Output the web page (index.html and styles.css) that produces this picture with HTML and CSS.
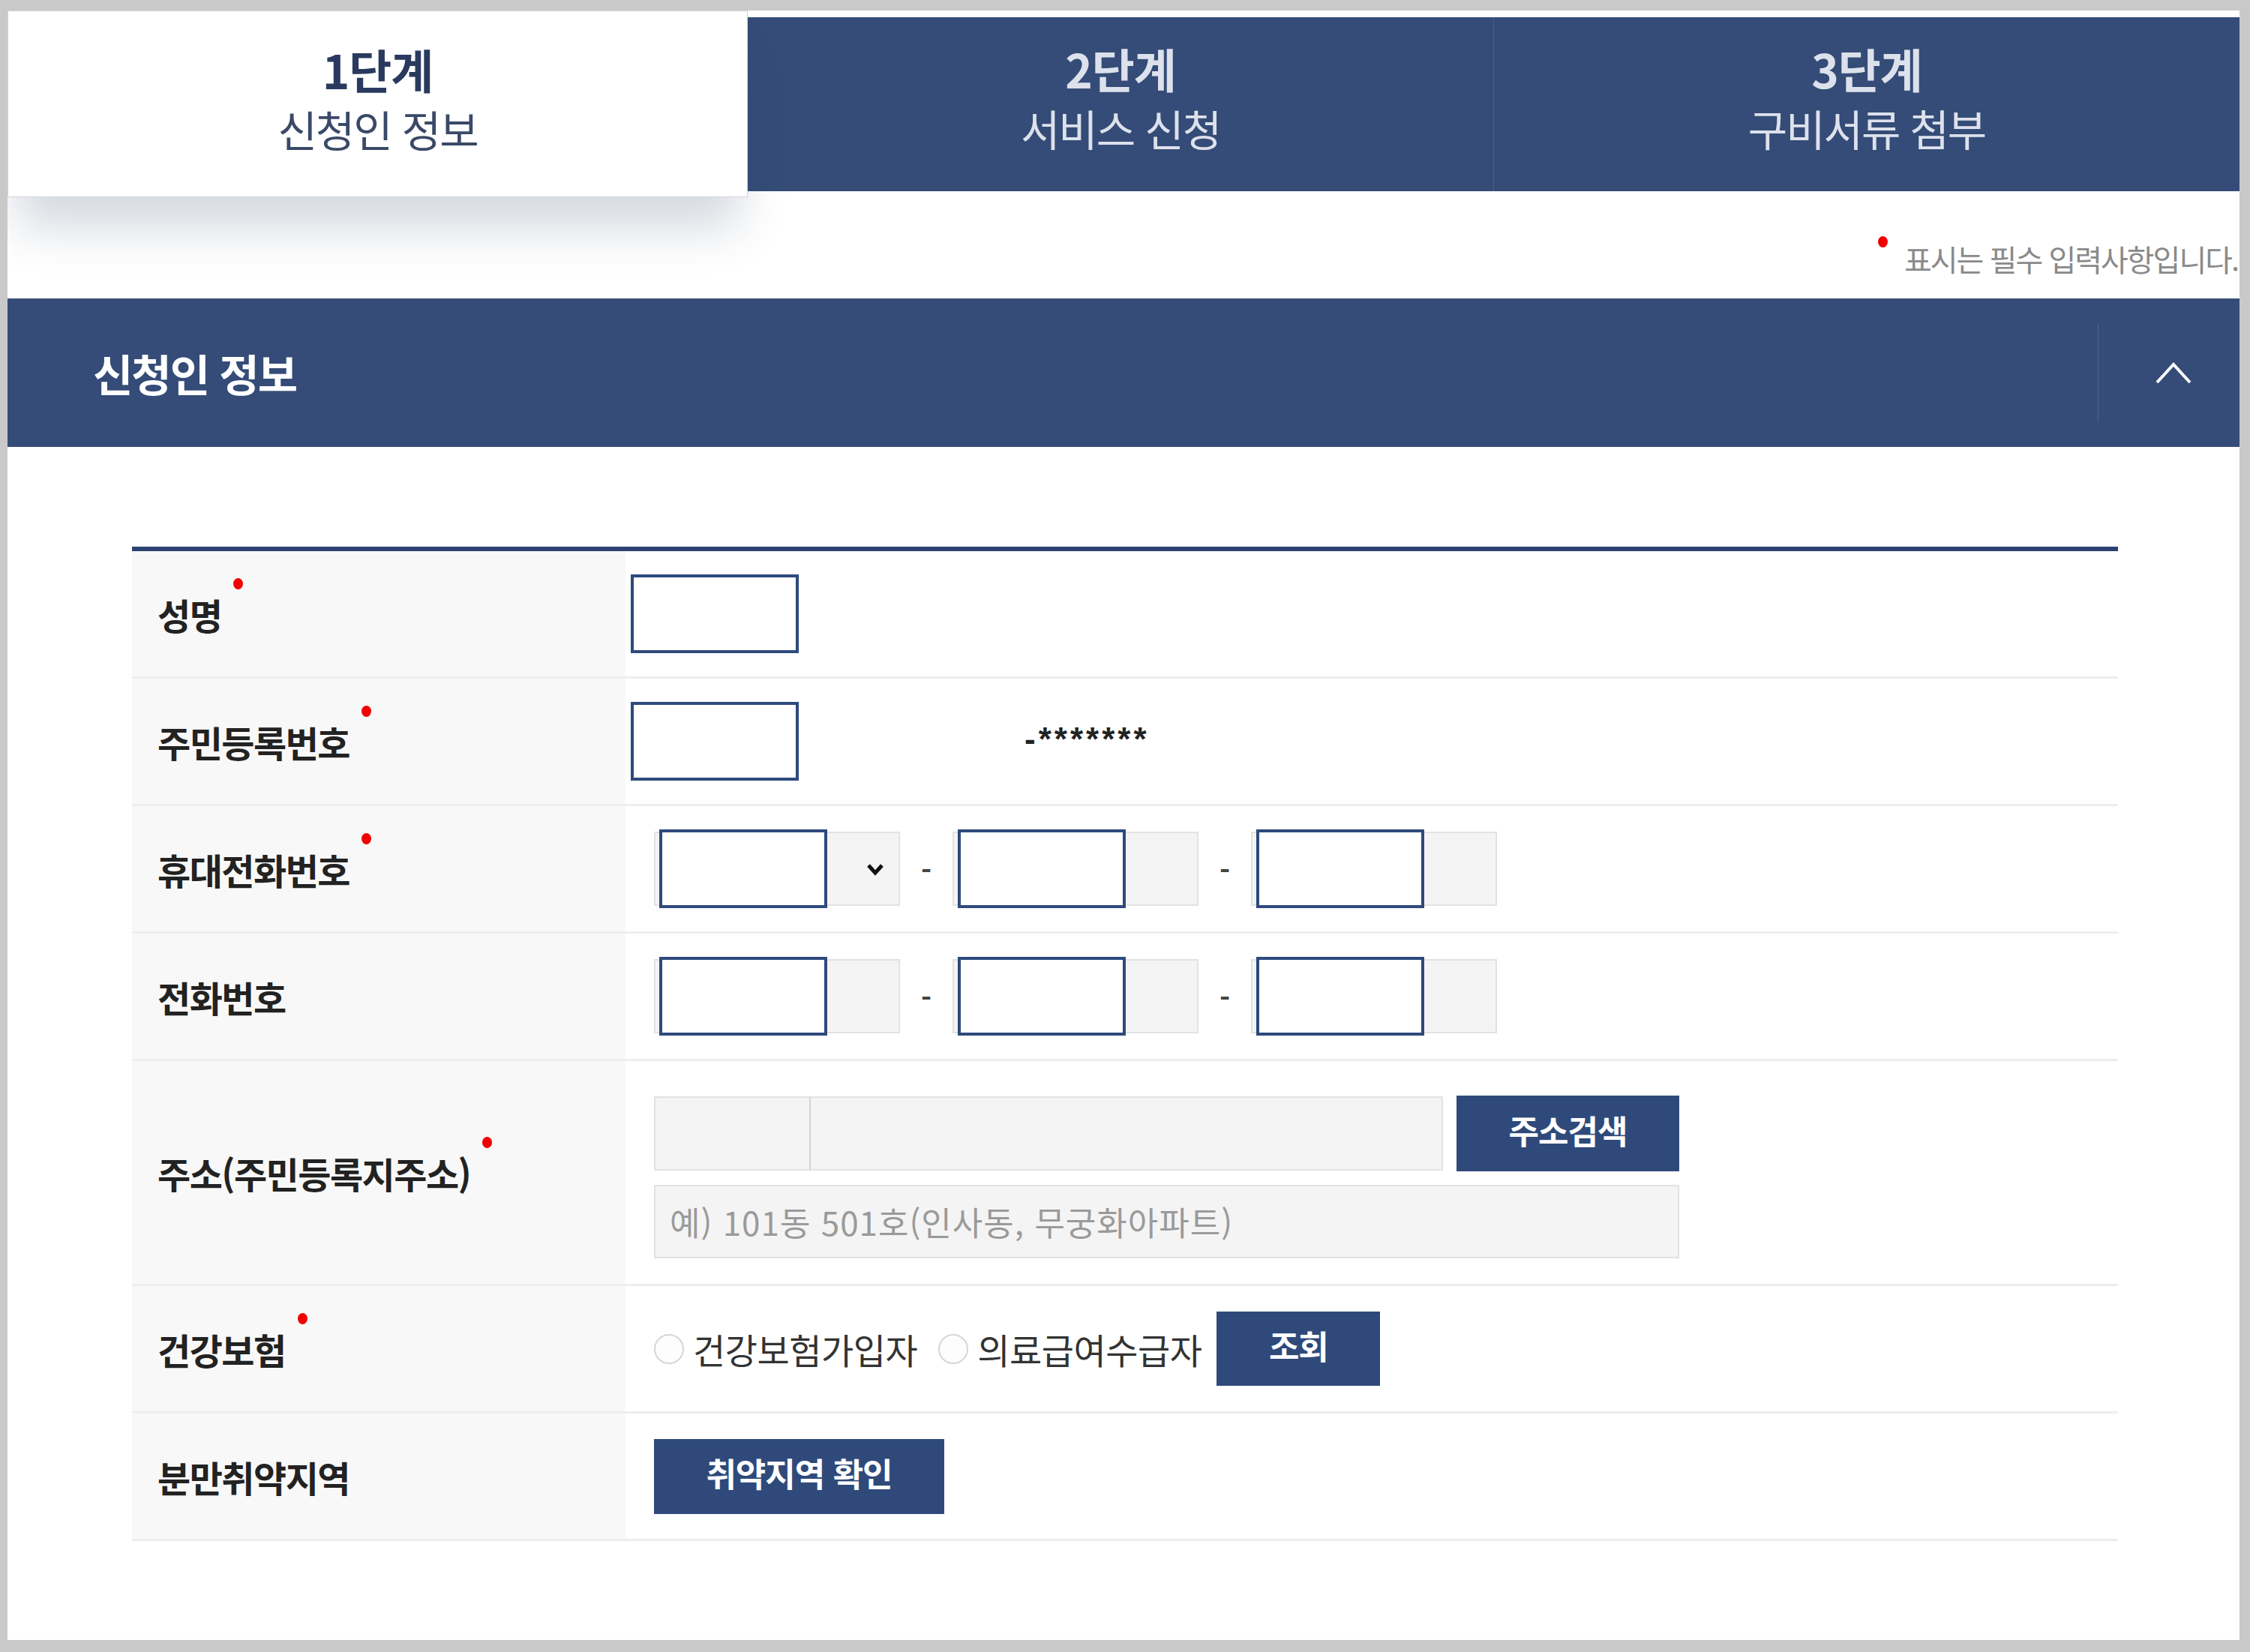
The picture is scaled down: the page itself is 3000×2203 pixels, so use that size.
FILE: index.html
```html
<!DOCTYPE html>
<html lang="ko">
<head>
  <meta charset="UTF-8">
  <meta name="viewport" content="width=device-width, initial-scale=1.0">
  <title>신청인 정보</title>
  <link rel="stylesheet" href="styles.css">
</head>
<body>
  <div class="page">
    <div class="steps">
      <div class="step active">
        <strong>1단계</strong>
        <span>신청인 정보</span>
      </div>
      <div class="step">
        <strong>2단계</strong>
        <span>서비스 신청</span>
      </div>
      <div class="step">
        <strong>3단계</strong>
        <span>구비서류 첨부</span>
      </div>
    </div>

    <p class="note"><i class="req"></i>표시는 필수 입력사항입니다.</p>

    <div class="section-head">
      <h2>신청인 정보</h2>
      <button class="toggle" type="button">
        <svg width="50" height="32" viewBox="0 0 50 32"><polyline points="3,29 25,5 47,29" fill="none" stroke="#fff" stroke-width="4"/></svg>
      </button>
    </div>

    <div class="form">
      <div class="row">
        <div class="label">성명<i class="req"></i></div>
        <div class="value near">
          <input class="box" type="text">
        </div>
      </div>
      <div class="row">
        <div class="label">주민등록번호<i class="req"></i></div>
        <div class="value near">
          <input class="box" type="text">
          <span class="mask">-*******</span>
        </div>
      </div>
      <div class="row">
        <div class="label">휴대전화번호<i class="req"></i></div>
        <div class="value">
          <div class="field">
            <input class="box" type="text">
            <svg class="arrow" width="24" height="18" viewBox="0 0 24 18"><polyline points="3,4 12,14 21,4" fill="none" stroke="#111" stroke-width="5"/></svg>
          </div>
          <span class="dash">-</span>
          <div class="field"><input class="box" type="text"></div>
          <span class="dash">-</span>
          <div class="field"><input class="box" type="text"></div>
        </div>
      </div>
      <div class="row">
        <div class="label">전화번호</div>
        <div class="value">
          <div class="field"><input class="box" type="text"></div>
          <span class="dash">-</span>
          <div class="field"><input class="box" type="text"></div>
          <span class="dash">-</span>
          <div class="field"><input class="box" type="text"></div>
        </div>
      </div>
      <div class="row tall">
        <div class="label">주소(주민등록지주소)<i class="req"></i></div>
        <div class="value stack">
          <div class="line">
            <input class="input zip" type="text">
            <input class="input addr" type="text">
            <button class="btn search" type="button">주소검색</button>
          </div>
          <input class="input detail" type="text" placeholder="예) 101동 501호(인사동, 무궁화아파트)">
        </div>
      </div>
      <div class="row">
        <div class="label">건강보험<i class="req"></i></div>
        <div class="value">
          <label class="opt"><input type="radio" name="ins">건강보험가입자</label>
          <label class="opt"><input type="radio" name="ins">의료급여수급자</label>
          <button class="btn lookup" type="button">조회</button>
        </div>
      </div>
      <div class="row">
        <div class="label">분만취약지역</div>
        <div class="value">
          <button class="btn area" type="button">취약지역 확인</button>
        </div>
      </div>
    </div>
  </div>
</body>
</html>
```

FILE: styles.css
```css
* {
  margin: 0;
  padding: 0;
  box-sizing: border-box;
}

html, body {
  height: 100%;
}

body {
  padding: 14px 14px 16px 10px;
  background-color: #c9c9c9;
  font-family: "Noto Sans CJK KR", "Noto Sans", sans-serif;
  color: #222;
}

input, button {
  appearance: none;
  border: none;
  outline: none;
  font-family: inherit;
}

.page {
  height: 100%;
  background-color: #fff;
  overflow: hidden;
}

/* steps */
.steps {
  display: flex;
  align-items: flex-start;
  height: 249px;
}

.step {
  flex: 1;
  height: 232px;
  margin-top: 9px;
  padding-top: 31px;
  display: flex;
  flex-direction: column;
  align-items: center;
  gap: 8px;
  background-color: #344c77;
  color: #dde1ec;
}

.step:last-child {
  border-left: 1px solid #4c6189;
}

.step strong {
  font-size: 62px;
  line-height: 1.2;
  font-weight: 700;
  letter-spacing: -1px;
}

.step span {
  font-size: 57px;
  line-height: 1.2;
  letter-spacing: -2px;
}

.step.active {
  flex: none;
  width: 987px;
  height: 249px;
  margin-top: 0;
  padding-top: 40px;
  position: relative;
  z-index: 1;
  background-color: #fff;
  color: #2a3a5f;
  border: 1px solid #d2d4da;
  box-shadow: 0 52px 60px -12px rgba(40, 60, 100, 0.2);
}

.step.active span {
  color: #3a4968;
}

/* required note */
.note {
  height: 135px;
  padding: 56px 0 0 2494px;
  font-size: 40px;
  line-height: 52px;
  letter-spacing: -2px;
  color: #8a8a8a;
  white-space: nowrap;
}

.req {
  display: inline-block;
  width: 13px;
  height: 15px;
  border-radius: 50%;
  background-color: #f00000;
}

.note .req {
  vertical-align: top;
  margin: -4px 22px 0 0;
}

/* section header */
.section-head {
  display: flex;
  align-items: center;
  height: 198px;
  background-color: #344c77;
}

.section-head h2 {
  flex: 1;
  padding-left: 114px;
  font-size: 58px;
  font-weight: 700;
  letter-spacing: -2px;
  color: #fff;
}

.toggle {
  width: 189px;
  height: 131px;
  padding-left: 12px;
  display: flex;
  justify-content: center;
  align-items: center;
  background: none;
  border-left: 1px solid #52668c;
  cursor: pointer;
}

/* form */
.form {
  margin: 133px 162px 0 166px;
  border-top: 6px solid #2b4272;
}

.row {
  display: flex;
  height: 170px;
  border-bottom: 3px solid #eeeeee;
}

.row.tall {
  height: 300px;
}

.label {
  width: 658px;
  padding-left: 34px;
  display: flex;
  align-items: center;
  background-color: #f8f8f8;
  font-size: 48px;
  font-weight: 700;
  letter-spacing: -1.5px;
  color: #222;
}

.label .req {
  margin: 0 0 80px 16px;
}

.value {
  flex: 1;
  display: flex;
  align-items: center;
  padding-left: 38px;
}

.value.near {
  padding-left: 7px;
}

.box {
  width: 224px;
  height: 105px;
  border: 4px solid #2e4a7d;
  background-color: #fff;
}

.mask {
  margin-left: 301px;
  margin-bottom: 6px;
  font-family: "Liberation Sans", sans-serif;
  font-size: 44px;
  font-weight: 700;
  letter-spacing: 4px;
  line-height: 1;
  color: #222;
}

.field {
  width: 328px;
  height: 99px;
  padding-left: 5px;
  display: flex;
  align-items: center;
  background-color: #f4f4f4;
  border: 2px solid #e2e2e2;
}

.field .box {
  flex: none;
}

.arrow {
  margin-left: auto;
  margin-right: 19px;
}

.dash {
  width: 70px;
  text-align: center;
  font-size: 38px;
  font-weight: 700;
  color: #444;
}

/* address */
.value.stack {
  flex-direction: column;
  align-items: flex-start;
  justify-content: center;
  gap: 18px;
  padding-top: 12px;
}

.line {
  display: flex;
  align-items: center;
}

.input {
  height: 99px;
  background-color: #f4f4f4;
  border: 2px solid #e2e2e2;
  font-size: 44px;
  color: #333;
}

.input.zip {
  width: 209px;
  border-right: 2px solid #d4d4d4;
}

.input.addr {
  width: 843px;
  border-left: none;
}

.input.detail {
  width: 1367px;
  height: 98px;
  padding-left: 19px;
  letter-spacing: 1px;
}

.input.detail::placeholder {
  color: #9a9a9a;
}

.btn {
  height: 100px;
  padding-bottom: 10px;
  background-color: #2f4a7a;
  color: #fff;
  font-size: 44px;
  font-weight: 700;
  letter-spacing: -1px;
  cursor: pointer;
}

.btn.search {
  width: 297px;
  height: 101px;
  margin-left: 18px;
}

.btn.lookup {
  width: 218px;
  height: 99px;
  margin-left: 20px;
}

.btn.area {
  width: 387px;
}

/* health insurance */
.opt {
  display: flex;
  align-items: center;
  margin-right: 28px;
  font-size: 47px;
  letter-spacing: -0.5px;
  color: #333;
}

.opt:last-of-type {
  margin-right: 0;
}

.opt input {
  width: 40px;
  height: 40px;
  margin-right: 12px;
  border: 2px solid #d6d6d6;
  border-radius: 50%;
  background-color: #fdfdfd;
}
```
